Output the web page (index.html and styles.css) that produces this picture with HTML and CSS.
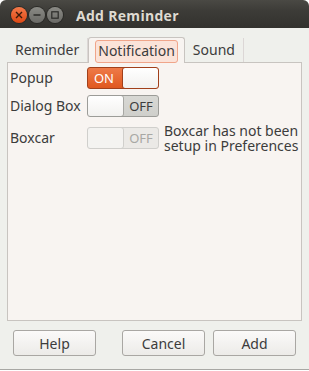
FILE: index.html
```html
<!DOCTYPE html>
<html lang="en">

<head>
    <meta charset="UTF-8">
    <title>Add Reminder</title>
    <link rel="stylesheet" href="styles.css">
</head>

<body>
    <div class="window">
        <!-- title bar -->
        <div class="titleBar">
            <div class="winButtons">
                <span class="winBtn close">
                    <svg width="8" height="8" viewBox="0 0 8 8"><path d="M1 1L7 7M7 1L1 7" stroke="#3a1a0a" stroke-width="1.4"/></svg>
                </span>
                <span class="winBtn">
                    <svg width="8" height="8" viewBox="0 0 8 8"><path d="M0.5 4H7.5" stroke="#2b2b28" stroke-width="1.4"/></svg>
                </span>
                <span class="winBtn">
                    <svg width="8" height="8" viewBox="0 0 8 8"><rect x="0.8" y="0.8" width="6.4" height="6.4" fill="none" stroke="#2b2b28" stroke-width="1.2"/></svg>
                </span>
            </div>
            <p class="title">Add Reminder</p>
        </div>

        <!-- tabs -->
        <div class="notebook">
            <ul class="tabs">
                <li class="tab">Reminder</li>
                <li class="tab active"><span class="focus">Notification</span></li>
                <li class="tab">Sound</li>
            </ul>
            <div class="panel">
                <div class="row">
                    <p class="label">Popup</p>
                    <div class="switch on">
                        <span class="switchText">ON</span>
                        <span class="knob"></span>
                    </div>
                </div>
                <div class="row">
                    <p class="label">Dialog Box</p>
                    <div class="switch off">
                        <span class="knob"></span>
                        <span class="switchText">OFF</span>
                    </div>
                </div>
                <div class="row">
                    <p class="label">Boxcar</p>
                    <div class="switch off disabled">
                        <span class="knob"></span>
                        <span class="switchText">OFF</span>
                    </div>
                    <p class="note">Boxcar has not been setup in Preferences</p>
                </div>
            </div>
        </div>

        <!-- buttons -->
        <div class="actions">
            <button class="btn">Help</button>
            <div class="actionsRight">
                <button class="btn">Cancel</button>
                <button class="btn">Add</button>
            </div>
        </div>
    </div>
</body>

</html>
```
FILE: styles.css
```css
/* reset */
body,
ul,
li,
div,
p {
    margin: 0;
    padding: 0;
    box-sizing: border-box;
}

li {
    list-style: none;
}

html,
body {
    height: 100%;
    background-color: #ffffff;
}

body {
    font-family: 'Noto Sans', 'DejaVu Sans', sans-serif;
    font-size: 14px;
    color: #3c3c3c;
}

/* window */
.window {
    display: flex;
    flex-direction: column;
    height: 370px;
    background-color: #eff0ec;
    border-radius: 6px 6px 0 0;
    border-bottom: 1px solid #a8a8a4;
    overflow: hidden;
}

.titleBar {
    display: flex;
    align-items: center;
    height: 28px;
    padding: 2px 0 0 11px;
    background: linear-gradient(#4a4944, #3c3b37 40%, #33322e);
}

.winButtons {
    display: flex;
    gap: 2px;
}

.winBtn {
    display: flex;
    align-items: center;
    justify-content: center;
    width: 16px;
    height: 16px;
    border-radius: 50%;
    background: linear-gradient(#8a8a85, #6a6a66);
    box-shadow: 0 0 0 1px #2a2a27;
}

.winBtn.close {
    background: linear-gradient(#f47a4a, #dd4814);
}

.title {
    margin-left: 13px;
    font-family: 'Open Sans', 'DejaVu Sans', sans-serif;
    font-size: 14px;
    font-weight: 700;
    color: #dfdbd2;
    letter-spacing: 0.3px;
}

/* notebook */
.notebook {
    display: flex;
    flex-direction: column;
    height: 285px;
    margin: 8px 7px 0 7px;
}

.tabs {
    display: flex;
    align-items: flex-end;
    height: 26px;
}

.tab {
    height: 24px;
    padding: 2px 8px 0 8px;
    border-right: 1px solid #dcd7d6;
    line-height: 20px;
}

.tab.active {
    height: 26px;
    padding: 2px 6px 0 6px;
    border: 1px solid #c8c4c0;
    border-bottom: none;
    border-radius: 3px 3px 0 0;
    background-color: #f8f4f1;
    margin-bottom: -1px;
    position: relative;
}

.focus {
    display: block;
    height: 21px;
    padding: 0 2px;
    border: 1px solid #f0a58a;
    border-radius: 3px;
    background-color: #fbe3d9;
    line-height: 19px;
}

.panel {
    flex-grow: 1;
    padding: 4px 0 0 2px;
    border: 1px solid #c8c4c0;
    background-color: #f8f4f1;
}

.row {
    display: flex;
    align-items: center;
    margin-bottom: 6px;
}

.label {
    flex-shrink: 0;
    width: 77px;
    line-height: 20px;
}

/* switch */
.switch {
    display: flex;
    flex-shrink: 0;
    width: 72px;
    height: 22px;
    border: 1px solid #9c9c98;
    border-radius: 3px;
    overflow: hidden;
    font-size: 13px;
}

.switchText {
    display: flex;
    align-items: center;
    justify-content: center;
    flex-grow: 1;
}

.knob {
    width: 35px;
    border-radius: 3px;
    border: 1px solid #a8a8a4;
    background: linear-gradient(#ffffff, #f2f1ef);
}

.switch.on {
    border-color: #a1401b;
    background: linear-gradient(#ee7a48, #e0581f);
}

.switch.on .switchText {
    color: #ffffff;
    padding-right: 2px;
}

.switch.on .knob {
    margin: -1px -1px -1px 0;
    border-color: #a1401b;
}

.switch.off {
    background: linear-gradient(#d8d8d4, #cfcfcb);
}

.switch.off .knob {
    margin: -1px 0 -1px -1px;
}

.switch.off .switchText {
    color: #3c3c3c;
}

.switch.disabled {
    border-color: #d0cfcc;
    background: #ebe9e6;
}

.switch.disabled .knob {
    border-color: #d0cfcc;
    background: #f4f3f1;
}

.switch.disabled .switchText {
    color: #a8a8a4;
}

.note {
    width: 140px;
    margin-left: 5px;
    line-height: 15px;
}

/* buttons */
.actions {
    display: flex;
    justify-content: space-between;
    padding: 9px 13px 0 13px;
}

.actionsRight {
    display: flex;
    gap: 8px;
}

.btn {
    width: 83px;
    height: 26px;
    border: 1px solid #a9a7a3;
    border-radius: 3px;
    background: linear-gradient(#fbfaf9, #ecebe8);
    font-family: 'Noto Sans', 'DejaVu Sans', sans-serif;
    font-size: 14px;
    color: #3c3c3c;
}
```
